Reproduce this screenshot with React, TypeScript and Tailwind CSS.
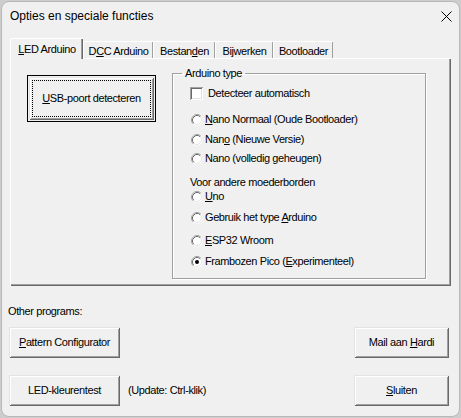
import React from "react";

function U({ children }: { children: React.ReactNode }) {
  return <span className="underline underline-offset-[1px] decoration-1">{children}</span>;
}

function Radio({ checked = false }: { checked?: boolean }) {
  return (
    <svg width="12" height="12" viewBox="0 0 12 12" className="shrink-0">
      <circle cx="6" cy="6" r="5.5" fill="#ffffff" />
      <path d="M2.11 9.89 A5.5 5.5 0 0 1 9.89 2.11" stroke="#a0a0a0" fill="none" />
      <path d="M2.82 9.18 A4.5 4.5 0 0 1 9.18 2.82" stroke="#696969" fill="none" />
      <path d="M9.18 2.82 A4.5 4.5 0 0 1 2.82 9.18" stroke="#e3e3e3" fill="none" />
      {checked && <circle cx="6" cy="6" r="2" fill="#000000" />}
    </svg>
  );
}

function Checkbox() {
  return (
    <div className="w-[13px] h-[13px] shrink-0 bg-white shadow-[inset_1px_1px_#a0a0a0,inset_-1px_-1px_#ffffff,inset_2px_2px_#696969,inset_-2px_-2px_#e3e3e3]" />
  );
}

function RadioRow({ label, checked, className }: { label: React.ReactNode; checked?: boolean; className: string }) {
  return (
    <div className={`flex items-center h-[13px] ml-[18px] gap-[2px] ${className}`}>
      <Radio checked={checked} />
      <span className="whitespace-nowrap">{label}</span>
    </div>
  );
}

function Button({ children, className }: { children: React.ReactNode; className: string }) {
  return (
    <div
      className={`flex items-center justify-center bg-[#f0f0f0] shadow-[inset_1px_1px_#e3e3e3,inset_-1px_-1px_#696969,inset_2px_2px_#ffffff,inset_-2px_-2px_#a0a0a0] ${className}`}
    >
      {children}
    </div>
  );
}

export default function App() {
  const tabs = [
    { label: <>D<U>C</U>C Arduino</>, w: "w-[70px]" },
    { label: <>Bestan<U>d</U>en</>, w: "w-[62px]" },
    { label: <>Bijwerken</>, w: "w-[58px]" },
    { label: <>Bootloader</>, w: "w-[60px]" },
  ];

  return (
    <div className="w-[461px] h-[418px] bg-[#cdcdcd] pt-px pl-px font-['Liberation_Sans',Arial,sans-serif] text-black">
      <div className="w-[459px] h-[416px] rounded-[8px] border border-[#b8b8b8] bg-[#f0f0f0] flex flex-col overflow-hidden text-[11px] tracking-[-0.4px] leading-[13px]">
        {/* title bar */}
        <div className="h-[28px] shrink-0 flex items-center justify-between pl-[8px] pr-[7px]">
          <span className="text-[12px] tracking-normal">Opties en speciale functies</span>
          <svg width="11" height="11" viewBox="0 0 11 11">
            <path d="M0.5 0.5 L10.5 10.5 M10.5 0.5 L0.5 10.5" stroke="#000" strokeWidth="1" />
          </svg>
        </div>

        {/* tabs */}
        <div className="flex items-end h-[20px] mt-[8px] ml-[8px]">
          <div className="relative z-10 w-[73px] h-[21px] -mb-px flex justify-center pt-[4px] bg-[#f0f0f0] border-t border-l border-white rounded-tl-[2px] shadow-[inset_-1px_0_#696969,inset_-2px_0_#a0a0a0]">
            <span>
              <U>L</U>ED Arduino
            </span>
          </div>
          {tabs.map((t, i) => (
            <div
              key={i}
              className={`${t.w} h-[17px] flex justify-center pt-[3px] border-t border-l border-white shadow-[inset_-1px_0_#a0a0a0]`}
            >
              <span className="whitespace-nowrap">{t.label}</span>
            </div>
          ))}
        </div>

        {/* tab panel */}
        <div className="mx-[8px] h-[228px] shrink-0 flex items-start border-t border-l border-white shadow-[inset_-1px_-1px_#696969,inset_-2px_-2px_#a0a0a0]">
          <div className="mt-[16px] ml-[16px] w-[129px] h-[47px] border border-black p-px">
            <Button className="w-full h-full relative">
              <div className="absolute inset-[3px] border border-dotted border-black" />
              <span>
                <U>U</U>SB-poort detecteren
              </span>
            </Button>
          </div>

          <fieldset className="mt-[8px] ml-[16px] w-[254px] h-[212px] border border-[#a0a0a0] shadow-[inset_1px_1px_#ffffff,1px_1px_#ffffff]">
            <legend className="ml-[9px] px-[3px]">Arduino type</legend>
            <div className="flex flex-col">
              <div className="flex items-center h-[13px] mt-[7px] ml-[17px] gap-[5px]">
                <Checkbox />
                <span>Detecteer automatisch</span>
              </div>
              <RadioRow className="mt-[13px]" label={<><U>N</U>ano Normaal (Oude Bootloader)</>} />
              <RadioRow className="mt-[7px]" label={<>Nan<U>o</U> (Nieuwe Versie)</>} />
              <RadioRow className="mt-[6px]" label={<>Nano (volledig geheugen)</>} />
              <div className="h-[13px] mt-[11px] ml-[17px]">Voor andere moederborden</div>
              <RadioRow className="mt-[1px]" label={<><U>U</U>no</>} />
              <RadioRow className="mt-[8px]" label={<>Gebruik het type <U>A</U>rduino</>} />
              <RadioRow className="mt-[10px]" label={<><U>E</U>SP32 Wroom</>} />
              <RadioRow className="mt-[8px]" checked label={<>Frambozen Pico (<U>E</U>xperimenteel)</>} />
            </div>
          </fieldset>
        </div>

        {/* other programs */}
        <div className="mt-[19px] ml-[6px] h-[13px]">Other programs:</div>
        <div className="flex items-center justify-between mt-[9px] ml-[7px] mr-[10px]">
          <Button className="w-[111px] h-[31px]">
            <span>
              <U>P</U>attern Configurator
            </span>
          </Button>
          <Button className="w-[95px] h-[31px]">
            <span>
              Mail aan <U>H</U>ardi
            </span>
          </Button>
        </div>
        <div className="flex items-center justify-between mt-[17px] ml-[7px] mr-[10px]">
          <div className="flex items-center gap-[8px]">
            <Button className="w-[111px] h-[31px]">
              <span>LED-kleurentest</span>
            </Button>
            <span>(Update: Ctrl-klik)</span>
          </div>
          <Button className="w-[95px] h-[31px]">
            <span>
              <U>S</U>luiten
            </span>
          </Button>
        </div>
      </div>
    </div>
  );
}
